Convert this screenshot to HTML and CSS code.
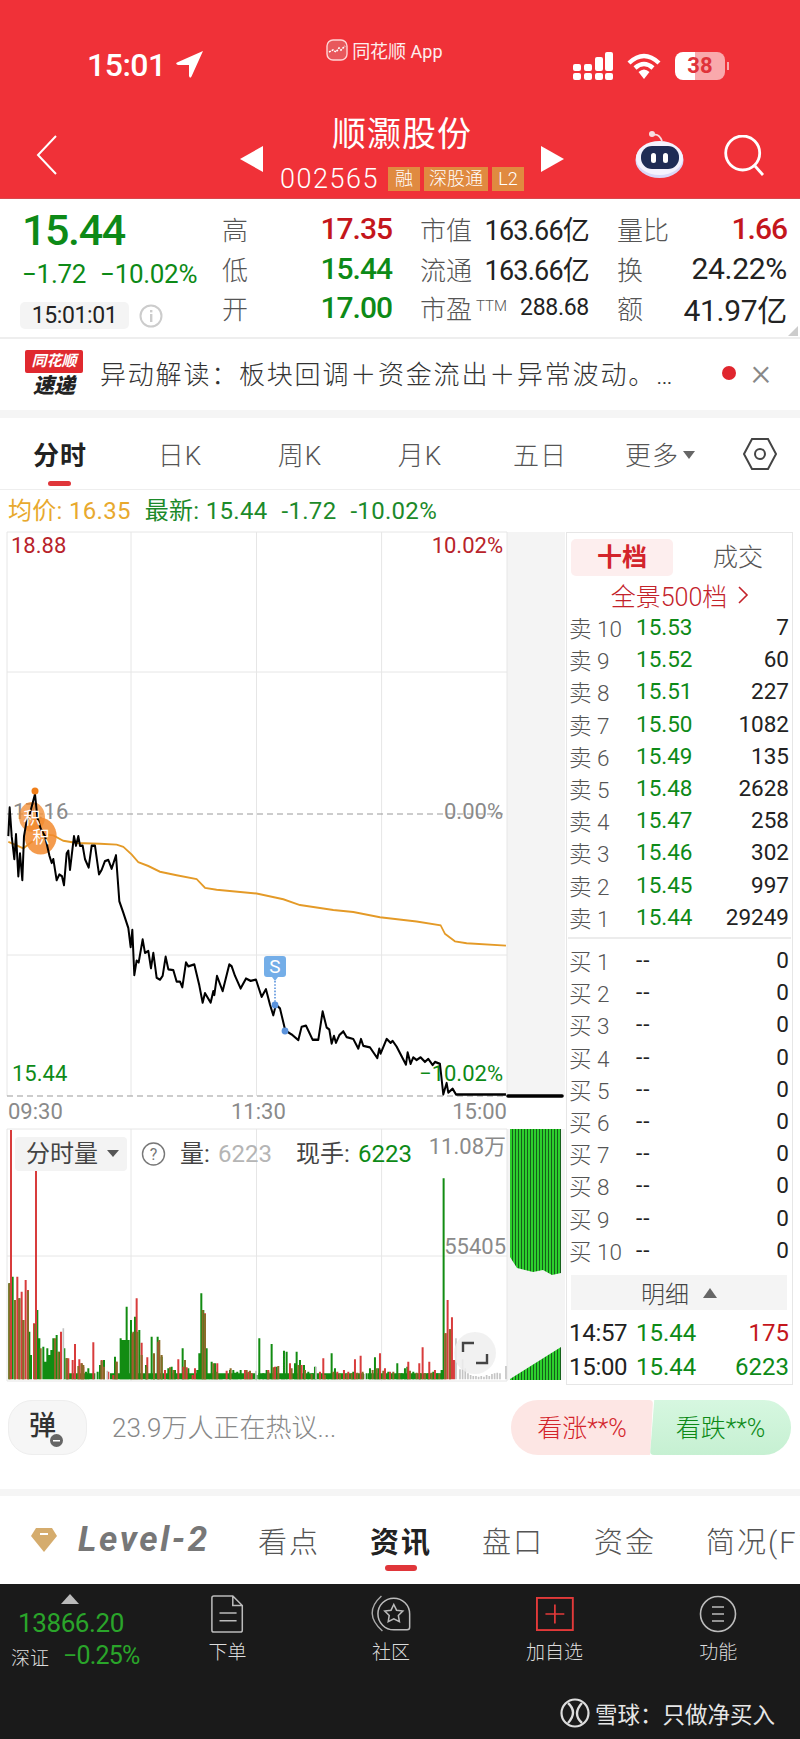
FILE: index.html
```html
<!DOCTYPE html>
<html lang="zh-CN">
<head>
  <meta charset="UTF-8" />
  <meta name="viewport" content="width=device-width, initial-scale=1.0"/>
  <title>顺灏股份</title>
  <link rel="stylesheet" href="styles.css">
</head>
<body>
  <header class="top">
    <div class="status">
      <div class="status-time">15:01
        <svg class="loc" viewBox="0 0 28 27"><path d="M27 0 L1 11.500 Q-1 13 2 14 L13 14 L13 25 Q14 28 15.500 25.500 Z" fill="#fff"/></svg>
      </div>
      <div class="status-app">
        <svg class="app-logo" viewBox="0 0 22 22"><rect x="1" y="1" width="20" height="20" rx="6" fill="#e8585c" stroke="#ffd5d5" stroke-width="1.4"/><path d="M3 13 L7 11 L10 13 L13 9 L15 11 L19 7" fill="none" stroke="#fff" stroke-width="1.6" stroke-dasharray="2 1"/></svg>
        <span>同花顺 App</span>
      </div>
      <div class="status-icons">
        <svg class="signal" viewBox="0 0 40 28" fill="#fff"><rect x="0" y="12" width="8" height="7" rx="2"/><rect x="0" y="21" width="8" height="7" rx="2"/><rect x="11" y="12" width="8" height="7" rx="2"/><rect x="11" y="21" width="8" height="7" rx="2"/><rect x="22" y="5" width="8" height="14" rx="2"/><rect x="22" y="21" width="8" height="7" rx="2"/><rect x="32" y="0" width="8" height="19" rx="2"/><rect x="32" y="21" width="8" height="7" rx="2"/></svg>
        <svg class="wifi" viewBox="0 0 34 28"><path d="M2 11 Q17 -3 32 11 M8 16 Q17 8 26 16" fill="none" stroke="#fff" stroke-width="4.4"/><path d="M11.500 20 Q17 15 22.500 20 L17 27 Z" fill="#fff"/></svg>
        <div class="battery"><span class="battery-num">38</span></div>
      </div>
    </div>
    <div class="nav">
      <svg class="back" viewBox="0 0 22 40"><path d="M20 1 L2 20 L20 39" fill="none" stroke="#fff" stroke-width="2"/></svg>
      <div class="nav-mid">
        <span class="tri-left"></span>
        <div class="stock">
          <div class="stock-name">顺灏股份</div>
          <div class="stock-meta">
            <span class="stock-code">002565</span>
            <span class="tag tag-s">融</span>
            <span class="tag tag-l">深股通</span>
            <span class="tag tag-s">L2</span>
          </div>
        </div>
        <span class="tri-right"></span>
      </div>
      <svg class="robot" viewBox="0 0 50 48">
        <circle cx="17" cy="4" r="3" fill="#f6dfe2"/><path d="M18 5 Q24 3 27 11" stroke="#f6dfe2" stroke-width="1.8" fill="none"/>
        <ellipse cx="24.500" cy="30" rx="24" ry="18" fill="#d9d8f8"/>
        <ellipse cx="24.500" cy="28" rx="23.500" ry="17" fill="#f4f3fe"/>
        <rect x="6" y="16" width="38" height="23" rx="11" fill="#1f2c55"/>
        <rect x="16" y="23" width="5" height="10" rx="2.500" fill="#fff"/><rect x="28" y="23" width="5" height="10" rx="2.500" fill="#fff"/>
      </svg>
      <svg class="search" viewBox="0 0 42 42"><circle cx="18.700" cy="18" r="17" fill="none" stroke="#fff" stroke-width="2.800"/><path d="M31 31 L39 40" stroke="#fff" stroke-width="2.800"/></svg>
    </div>
  </header>

  <section class="quote">
    <div class="quote-left">
      <div class="price">15.44</div>
      <div class="change"><span>−1.72</span><span>−10.02%</span></div>
      <div class="clock-row">
        <span class="clock">15:01:01</span>
        <svg class="info" viewBox="0 0 24 24"><circle cx="12" cy="12" r="10.500" fill="none" stroke="#ccc" stroke-width="2"/><rect x="11" y="10" width="2.400" height="8" fill="#ccc"/><rect x="11" y="6" width="2.400" height="2.400" fill="#ccc"/></svg>
      </div>
    </div>
    <div class="quote-grid">
      <div class="cell"><span class="lbl">高</span><span class="val up">17.35</span></div>
      <div class="cell"><span class="lbl">市值</span><span class="val2">163.66亿</span></div>
      <div class="cell"><span class="lbl">量比</span><span class="val up">1.66</span></div>
      <div class="cell"><span class="lbl">低</span><span class="val down">15.44</span></div>
      <div class="cell"><span class="lbl">流通</span><span class="val2">163.66亿</span></div>
      <div class="cell"><span class="lbl">换</span><span class="val-big">24.22%</span></div>
      <div class="cell"><span class="lbl">开</span><span class="val down">17.00</span></div>
      <div class="cell"><span class="lbl">市盈<sup class="ttm">TTM</sup></span><span class="val3">288.68</span></div>
      <div class="cell"><span class="lbl">额</span><span class="val-big">41.97亿</span></div>
    </div>
    <span class="corner"></span>
  </section>

  <section class="flash">
    <div class="flash-logo">
      <span class="flash-brand">同花顺</span>
      <span class="flash-sub">速递</span>
    </div>
    <div class="flash-text">异动解读：板块回调＋资金流出＋异常波动。…</div>
    <span class="flash-dot"></span>
    <span class="flash-close">×</span>
  </section>

  <nav class="tabs">
    <a class="tab tab-on">分时</a>
    <a class="tab">日K</a>
    <a class="tab">周K</a>
    <a class="tab">月K</a>
    <a class="tab">五日</a>
    <a class="tab">更多<i class="caret"></i></a>
    <svg class="hex" viewBox="0 0 36 36"><path d="M10 3 H26 L34 18 L26 33 H10 L2 18 Z" fill="none" stroke="#444" stroke-width="2"/><circle cx="18" cy="18" r="5" fill="none" stroke="#444" stroke-width="2"/></svg>
  </nav>

  <div class="legend">
    <span class="avg">均价: 16.35</span>
    <span class="latest">最新: 15.44</span>
    <span class="latest">-1.72</span>
    <span class="latest">-10.02%</span>
  </div>

  <main class="board">
    <svg class="chart" viewBox="0 530 566 856">
      <defs>
        <pattern id="stripes" x="510" width="3" height="10" patternUnits="userSpaceOnUse"><rect width="3" height="10" fill="#14601a"/><rect width="2" height="10" fill="#2dd02d"/></pattern>
      </defs>
      <rect x="507" y="532" width="58" height="564" fill="#f4f4f4"/>
      <rect x="507" y="1129" width="58" height="251" fill="#f4f4f4"/>
      <path d="M7 532 H507 M7 672 H507 M7 955 H507 M7 532 V1096 M507 532 V1096 M131 532 V1096 M256.500 532 V1096 M381.600 532 V1096" stroke="#e6e6e6" fill="none"/>
      <path d="M7 814 H507 M7 1096 H507" stroke="#999" stroke-dasharray="6 4" fill="none"/>
      <path d="M7 1129 H507 M7 1256 H507 M7 1381 H507 M7 1129 V1381 M131 1129 V1381 M256.500 1129 V1381 M381.600 1129 V1381 M507 1129 V1381" stroke="#e6e6e6" fill="none"/>

      <text class="ch up" x="11" y="553">18.88</text>
      <text class="ch up end" x="503" y="553">10.02%</text>
      <text class="ch mute" x="13" y="819">17.16</text>
      <text class="ch mute end" x="503" y="819">0.00%</text>
      <text class="ch down" x="12" y="1081">15.44</text>
      <text class="ch down end" x="503" y="1081">−10.02%</text>
      <text class="ch mute" x="8" y="1119">09:30</text>
      <text class="ch mute" x="231" y="1119">11:30</text>
      <text class="ch mute end" x="507" y="1119">15:00</text>

      <g transform="translate(0 530) scale(.3333 .3827)">
        <path fill="none" stroke="#e49a27" stroke-width="5" d="M25 815 L40 820 L70 832 L95 815 L130 795 L160 798 L190 812 L230 818 L300 820 L350 822 L370 828 L395 848 L415 868 L445 878 L480 893 L530 902 L590 912 L615 935 L650 940 L770 950 L850 965 L900 980 L1000 993 L1060 998 L1140 1012 L1250 1023 L1322 1033 L1335 1055 L1365 1075 L1400 1080 L1518 1086"/>
        <circle cx="96" cy="750" r="39" fill="#f28a2e" opacity=".75"/>
        <circle cx="122" cy="800" r="48" fill="#f28a2e" opacity=".85"/>
        <path fill="none" stroke="#000" stroke-width="6" stroke-linejoin="round" d="M25 800 L29 725 L35 800 L43 860 L48 795 L55 905 L60 845 L67 915 L72 800 L80 760 L90 740 L105 690 L112 750 L122 780 L135 800 L148 850 L155 870 L160 860 L170 915 L178 900 L186 905 L192 928 L200 845 L205 838 L210 888 L222 800 L228 825 L235 800 L240 825 L248 825 L255 860 L266 882 L275 825 L285 825 L297 900 L305 888 L315 865 L325 862 L335 885 L348 850 L358 970 L370 1000 L385 1040 L392 1090 L397 1045 L403 1163 L410 1125 L416 1130 L428 1070 L435 1105 L445 1100 L453 1145 L460 1105 L470 1170 L480 1175 L488 1165 L497 1115 L505 1148 L520 1150 L530 1180 L540 1180 L547 1195 L558 1130 L565 1140 L583 1135 L598 1190 L608 1235 L615 1210 L632 1235 L640 1205 L643 1215 L651 1165 L668 1205 L688 1135 L695 1140 L705 1165 L722 1198 L738 1172 L752 1178 L768 1175 L785 1220 L798 1200 L810 1240 L820 1268 L828 1240 L840 1250 L856 1308 L875 1318 L895 1333 L905 1298 L918 1295 L938 1332 L955 1332 L968 1258 L980 1300 L988 1305 L995 1342 L1002 1322 L1008 1340 L1018 1320 L1030 1310 L1040 1325 L1060 1330 L1075 1355 L1083 1330 L1090 1348 L1110 1352 L1132 1380 L1138 1355 L1142 1368 L1160 1330 L1172 1340 L1178 1335 L1190 1350 L1218 1397 L1223 1365 L1232 1395 L1240 1378 L1250 1385 L1262 1378 L1275 1390 L1285 1382 L1298 1398 L1305 1390 L1320 1395 L1330 1475 L1340 1445 L1345 1470 L1358 1460 L1368 1475 L1518 1475"/>
      </g>
      <circle cx="35" cy="791" r="3.500" fill="#f07f1a"/>
      <text class="mark" x="32" y="824">积</text>
      <text class="mark" x="41" y="843">积</text>

      <path d="M267 956 H283 Q286 956 286 959 V974 Q286 977 283 977 H278 L275 981 L272 977 H267 Q264 977 264 974 V959 Q264 956 267 956 Z" fill="#74aee8"/>
      <text class="s-mark" x="275" y="973">S</text>
      <path d="M275 981 V1005" stroke="#5b93dc" stroke-width="1.600" stroke-dasharray="1.600 1.600"/>
      <circle cx="275" cy="1005" r="3.400" fill="#5b93dc"/>
      <circle cx="285" cy="1031" r="3.400" fill="#5b93dc"/>

      <path d="M508 1096 H562" stroke="#000" stroke-width="3.600" stroke-linecap="round"/>
      <path d="M510 1129 H561 V1273 L552 1275 L543 1270 L533 1272 L517 1268 L510 1257 Z" fill="url(#stripes)"/>
      <path d="M510 1380 L510 1379 L561 1347 V1380 Z" fill="url(#stripes)"/>

      <g transform="translate(0 1120) scale(.3333)" fill="none" stroke-width="6">
        <path stroke="#128c12" stroke-width="18" d="M200 769 H286 M330 769 H768 M775 769 H1092 M1104 769 H1330"/>
        <path stroke="#128c12" d="M28 778V490M38 778V470M45 778V540M58 778V535M70 778V600M88 778V635M93 778V705M112 778V570M118 778V655M130 778V680M136 778V725M142 778V685M148 778V705M154 778V690M160 778V655M170 778V645M178 778V695M193 778V685M200 778V715M258 778V755M265 778V745M293 778V755M300 778V735M312 778V720M345 778V710M362 778V655M368 778V660M374 778V660M380 778V560M386 778V660M393 778V600M405 778V590M418 778V630M438 778V735M455 778V650M462 778V705M473 778V650M485 778V710M505 778V745M515 778V740M525 778V750M548 778V685M565 778V745M592 778V750M598 778V700M604 778V520M610 778V570M620 778V685M628 778V770M635 778V725M645 778V730M660 778V765M665 778V765M690 778V750M700 778V750M706 778V758M712 778V755M722 778V750M770 778V765M778 778V655M790 778V760M800 778V750M815 778V672M830 778V740M846 778V775M852 778V692M860 778V695M885 778V730M890 778V695M900 778V720M912 778V735M925 778V755M938 778V760M945 778V740M985 778V770M995 778V700M1005 778V745M1060 778V755M1100 778V760M1110 778V745M1125 778V712M1135 778V745M1165 778V755M1192 778V730M1205 778V760M1215 778V745M1222 778V740M1240 778V755M1260 778V760M1285 778V760M1300 778V755M1312 778V760M1325 778V750M1331 778V175"/>
        <path stroke="#d83c3c" d="M33 778V30M52 778V470M65 778V515M77 778V480M84 778V510M102 778V610M108 778V145M183 778V635M205 778V715M218 778V720M225 778V672M238 778V718M245 778V730M250 778V740M280 778V667M305 778V720M325 778V755M340 778V765M350 778V725M398 778V640M410 778V535M425 778V668M442 778V712M475 778V665M495 778V750M535 778V718M550 778V740M560 778V742M578 778V765M585 778V745M615 778V580M652 778V730M680 778V752M735 778V750M745 778V755M755 778V760M805 778V750M825 778V740M870 778V730M905 778V735M960 778V755M970 778V715M1012 778V755M1032 778V750M1045 778V755M1065 778V718M1082 778V707M1140 778V700M1155 778V745M1170 778V755M1225 778V725M1258 778V730M1268 778V682M1288 778V725M1305 778V750M1336 778V640M1343 778V540M1350 778V628M1356 778V592M1362 778V720"/>
        <path stroke="#8a6a28" d="M28 778V490M45 778V540M58 778V535M70 778V600M84 778V512M105 778V612M122 778V685M165 778V655M175 778V695M200 778V715M235 778V738M245 778V730M250 778V735M305 778V722M312 778V740M350 778V725M400 778V635M412 778V635M425 778V705M440 778V740M462 778V700M478 778V660M485 778V705M510 778V742M520 778V750M555 778V720M608 778V570M615 778V582M640 778V730M650 778V755M692 778V745M740 778V750M750 778V752M805 778V755M820 778V742M835 778V738M875 778V745M895 778V735M915 778V750M935 778V762M975 778V765M1000 778V755M1020 778V762M1040 778V762M1055 778V760M1072 778V758M1088 778V755M1118 778V750M1130 778V745M1150 778V752M1180 778V755M1198 778V760M1230 778V752M1250 778V758M1275 778V760M1295 778V758M1318 778V762M1337 778V640M1350 778V628"/>
        <path stroke="#c4c4c4" stroke-width="5" d="M190 778V625M322 778V752M768 778V752M948 778V740M1095 778V762M1368 778V655M1380 778V748M1388 778V718M1396 778V745M1404 778V760M1412 778V765M1420 778V768M1428 778V768M1436 778V770M1444 778V768M1452 778V770M1460 778V765M1468 778V768M1476 778V762M1484 778V760M1492 778V758M1500 778V760M1518 778V738"/>
      </g>

      <rect x="15" y="1137" width="112" height="34" rx="4" fill="#f3f3f3"/>
      <text class="vol ink" x="26" y="1162">分时量</text>
      <path d="M107 1150 H119 L113 1157 Z" fill="#555"/>
      <circle cx="153.500" cy="1154" r="11" fill="none" stroke="#777" stroke-width="1.400"/>
      <text class="help" x="153.500" y="1160">?</text>
      <text class="vol ink" x="180" y="1162">量:</text>
      <text class="vol pale" x="218" y="1162">6223</text>
      <text class="vol ink" x="296" y="1162">现手:</text>
      <text class="vol down" x="358" y="1162">6223</text>
      <text class="vol-side mute end" x="506" y="1154">11.08万</text>
      <text class="vol-side mute end" x="506" y="1254">55405</text>

      <circle cx="475" cy="1353" r="21" fill="#eee" opacity=".85"/>
      <path d="M463 1352 V1343 H474 M487 1354 V1363 H476" fill="none" stroke="#444" stroke-width="2.400"/>
    </svg>

    <aside class="book">
      <div class="book-tabs">
        <span class="book-tab book-tab-on">十档</span>
        <span class="book-tab">成交</span>
      </div>
      <div class="book-link">全景500档 <svg class="chev" viewBox="0 0 12 20"><path d="M2 2 L10 10 L2 18" fill="none" stroke="#c3222a" stroke-width="1.600"/></svg></div>
      <div class="rows">
        <div class="row"><span class="r-l">卖 10</span><span class="r-p">15.53</span><span class="r-q">7</span></div>
        <div class="row"><span class="r-l">卖 9</span><span class="r-p">15.52</span><span class="r-q">60</span></div>
        <div class="row"><span class="r-l">卖 8</span><span class="r-p">15.51</span><span class="r-q">227</span></div>
        <div class="row"><span class="r-l">卖 7</span><span class="r-p">15.50</span><span class="r-q">1082</span></div>
        <div class="row"><span class="r-l">卖 6</span><span class="r-p">15.49</span><span class="r-q">135</span></div>
        <div class="row"><span class="r-l">卖 5</span><span class="r-p">15.48</span><span class="r-q">2628</span></div>
        <div class="row"><span class="r-l">卖 4</span><span class="r-p">15.47</span><span class="r-q">258</span></div>
        <div class="row"><span class="r-l">卖 3</span><span class="r-p">15.46</span><span class="r-q">302</span></div>
        <div class="row"><span class="r-l">卖 2</span><span class="r-p">15.45</span><span class="r-q">997</span></div>
        <div class="row"><span class="r-l">卖 1</span><span class="r-p">15.44</span><span class="r-q">29249</span></div>
      </div>
      <div class="rows rows-buy">
        <div class="row"><span class="r-l">买 1</span><span class="r-p r-none">--</span><span class="r-q">0</span></div>
        <div class="row"><span class="r-l">买 2</span><span class="r-p r-none">--</span><span class="r-q">0</span></div>
        <div class="row"><span class="r-l">买 3</span><span class="r-p r-none">--</span><span class="r-q">0</span></div>
        <div class="row"><span class="r-l">买 4</span><span class="r-p r-none">--</span><span class="r-q">0</span></div>
        <div class="row"><span class="r-l">买 5</span><span class="r-p r-none">--</span><span class="r-q">0</span></div>
        <div class="row"><span class="r-l">买 6</span><span class="r-p r-none">--</span><span class="r-q">0</span></div>
        <div class="row"><span class="r-l">买 7</span><span class="r-p r-none">--</span><span class="r-q">0</span></div>
        <div class="row"><span class="r-l">买 8</span><span class="r-p r-none">--</span><span class="r-q">0</span></div>
        <div class="row"><span class="r-l">买 9</span><span class="r-p r-none">--</span><span class="r-q">0</span></div>
        <div class="row"><span class="r-l">买 10</span><span class="r-p r-none">--</span><span class="r-q">0</span></div>
      </div>
      <div class="detail-head">明细<i class="detail-tri"></i></div>
      <div class="row row-deal"><span class="r-l r-time">14:57</span><span class="r-p">15.44</span><span class="r-q up">175</span></div>
      <div class="row row-deal"><span class="r-l r-time">15:00</span><span class="r-p">15.44</span><span class="r-q down">6223</span></div>
    </aside>
  </main>

  <section class="talk">
    <div class="danmu">弹<i class="danmu-off"></i></div>
    <div class="talk-text">23.9万人正在热议...</div>
    <div class="vote">
      <span class="vote-up">看涨**%</span>
      <span class="vote-down">看跌**%</span>
    </div>
  </section>

  <nav class="subtabs">
    <svg class="gem" viewBox="0 0 28 26"><path d="M6 1 H22 L27 9 L14 25 L1 9 Z" fill="#d5ac6d"/><rect x="10" y="6" width="8" height="2" fill="#fff"/></svg>
    <span class="level">Level-2</span>
    <a class="subtab">看点</a>
    <a class="subtab subtab-on">资讯</a>
    <a class="subtab">盘口</a>
    <a class="subtab">资金</a>
    <a class="subtab subtab-last">简况(F10)</a>
  </nav>

  <footer class="dock">
    <div class="dock-row">
      <div class="market">
        <i class="market-tri"></i>
        <div class="market-num">13866.20</div>
        <div class="market-sub"><span class="market-name">深证</span><span class="market-pct">−0.25%</span></div>
      </div>
      <div class="dock-item">
        <svg class="dock-ico" viewBox="0 0 36 40"><path d="M2 3 Q2 1 4 1 H24 L34 11 V37 Q34 39 32 39 H4 Q2 39 2 37 Z M24 1 V11 H34 M10 19 H28 M10 27 H28" fill="none" stroke="#bbb" stroke-width="1.600"/></svg>
        <span>下单</span>
      </div>
      <div class="dock-item">
        <svg class="dock-ico" viewBox="0 0 42 40"><path d="M11 1 Q-9 19 12 38" fill="none" stroke="#aaa" stroke-width="1.500"/><path d="M40.700 20 A16.700 16.700 0 1 0 24 36.700 H38 Q40.700 36.700 40.700 34 Z" fill="none" stroke="#bbb" stroke-width="1.600"/><path d="M24 10 L26.900 16 L33.500 16.900 L28.800 21.500 L29.900 28.100 L24 25 L18.100 28.100 L19.200 21.500 L14.500 16.900 L21.100 16 Z" fill="none" stroke="#bbb" stroke-width="1.600"/></svg>
        <span>社区</span>
      </div>
      <div class="dock-item">
        <svg class="dock-ico dock-ico-add" viewBox="0 0 40 36"><rect x="1" y="1" width="38" height="34" fill="none" stroke="#e33a3a" stroke-width="2"/><path d="M20 8 V28 M10 18 H30" stroke="#e33a3a" stroke-width="1.800"/></svg>
        <span>加自选</span>
      </div>
      <div class="dock-item">
        <svg class="dock-ico" viewBox="0 0 38 38"><circle cx="19" cy="19" r="17.500" fill="none" stroke="#bbb" stroke-width="1.600"/><path d="M13 12 H25 M13 19 H25 M13 26 H25" stroke="#bbb" stroke-width="1.600"/></svg>
        <span>功能</span>
      </div>
    </div>
    <div class="watermark">
      <svg class="wm-ico" viewBox="0 0 30 30"><circle cx="15" cy="15" r="13.500" fill="none" stroke="#ddd" stroke-width="2.200"/><path d="M8 5 Q18 14 8 25 M22 5 Q12 16 22 25" fill="none" stroke="#ddd" stroke-width="2.400"/></svg>
      <span>雪球：只做净买入</span>
    </div>
  </footer>
</body>
</html>
```

FILE: styles.css
```css
* {
  box-sizing: border-box;
}
html, body {
  margin: 0;
  padding: 0;
}
body {
  width: 800px;
  height: 1739px;
  overflow: hidden;
  background: #fff;
  font-family: Roboto, "Noto Sans CJK SC", sans-serif;
  color: #222;
}
i {
  display: block;
}

.up { color: #c4161c; fill: #b8232a; }
.down { color: #0d8a17; fill: #0d8a17; }

/* red header */
.top {
  height: 199px;
  background: #f03138;
  color: #fff;
  border-bottom: 1px solid #d9484d;
}
.status {
  height: 104px;
  padding-top: 38px;
  position: relative;
  display: flex;
  justify-content: space-between;
}
.status-time {
  margin: 11px 0 0 87px;
  display: flex;
  align-items: flex-start;
  gap: 10px;
  font-size: 32px;
  line-height: 32px;
  font-weight: 500;
  letter-spacing: -.5px;
}
.loc {
  width: 28px;
  height: 27px;
  margin-top: 2px;
}
.status-app {
  display: flex;
  align-items: center;
  gap: 4px;
  height: 24px;
  margin-left: -8px;
  font-size: 18px;
  color: #fdeeee;
}
.app-logo {
  width: 22px;
  height: 22px;
}
.status-icons {
  display: flex;
  align-items: center;
  gap: 14px;
  height: 28px;
  margin: 14px 75px 0 0;
}
.signal {
  width: 40px;
  height: 28px;
}
.wifi {
  width: 34px;
  height: 28px;
}
.battery {
  width: 50px;
  height: 28px;
  border-radius: 8px;
  background: linear-gradient(90deg, #fff 0, #fff 40%, #f9a9ac 40%);
  text-align: center;
  position: relative;
}
.battery::after {
  content: "";
  position: absolute;
  right: -4px;
  top: 10px;
  width: 2px;
  height: 8px;
  background: #f9a9ac;
}
.battery-num {
  font-size: 22px;
  line-height: 28px;
  font-weight: 700;
  color: #e0323a;
}

.nav {
  height: 94px;
  display: flex;
  align-items: flex-start;
  padding-left: 36px;
}
.back {
  width: 22px;
  height: 40px;
  margin-top: 31px;
}
.nav-mid {
  display: flex;
  align-items: center;
  justify-content: space-between;
  width: 324px;
  margin-left: 182px;
  height: 94px;
}
.tri-left, .tri-right {
  width: 0;
  height: 0;
  margin-top: 16px;
  border-top: 13px solid transparent;
  border-bottom: 13px solid transparent;
}
.tri-left { border-right: 23px solid #fff; }
.tri-right { border-left: 23px solid #fff; }
.stock {
  text-align: center;
  height: 94px;
}
.stock-name {
  font-size: 34px;
  line-height: 40px;
  margin-top: 10px;
  letter-spacing: 1px;
  font-weight: 400;
}
.stock-meta {
  display: flex;
  align-items: center;
  gap: 4px;
  margin-top: 13px;
  height: 24px;
}
.stock-code {
  font-size: 27px;
  font-weight: 300;
  letter-spacing: 1.5px;
  margin-right: 5px;
}
.tag {
  height: 24px;
  line-height: 24px;
  background: #e08a40;
  font-size: 18px;
  font-weight: 300;
  text-align: center;
}
.tag-s { width: 32px; }
.tag-l { width: 64px; }
.robot {
  width: 50px;
  height: 48px;
  margin: 26px 0 0 71px;
}
.search {
  width: 42px;
  height: 42px;
  margin: 31px 0 0 39px;
}

/* quote block */
.quote {
  height: 140px;
  display: flex;
  position: relative;
  border-bottom: 2px solid #eee;
}
.quote-left {
  width: 222px;
  padding: 10px 0 0 22px;
}
.price {
  font-size: 43px;
  line-height: 42px;
  font-weight: 500;
  letter-spacing: -1.4px;
  color: #0d8a17;
}
.change {
  display: flex;
  gap: 14px;
  margin-top: 9px;
  font-size: 26px;
  line-height: 28px;
  color: #0d8a17;
  letter-spacing: -.3px;
  white-space: nowrap;
}
.clock-row {
  display: flex;
  align-items: center;
  gap: 10px;
  margin-top: 14px;
}
.clock {
  width: 109px;
  height: 27px;
  line-height: 27px;
  margin-left: -2px;
  text-align: center;
  background: #f4f4f4;
  border-radius: 5px;
  font-size: 23px;
  letter-spacing: -.4px;
}
.info {
  width: 24px;
  height: 24px;
}
.quote-grid {
  width: 564px;
  margin-top: 10px;
  display: grid;
  grid-template-columns: 170px 169px 170px;
  column-gap: 28px;
  grid-auto-rows: 39.5px;
}
.cell {
  display: flex;
  align-items: center;
  justify-content: space-between;
}
.lbl {
  font-size: 26px;
  font-weight: 300;
  color: #555;
  white-space: nowrap;
}
.ttm {
  font-size: 15px;
  margin-left: 4px;
  vertical-align: 8px;
  line-height: 0;
}
.val {
  font-size: 30px;
  font-weight: 500;
  letter-spacing: -1px;
}
.val2 {
  font-size: 27px;
  letter-spacing: -.8px;
}
.val3 {
  font-size: 23px;
  letter-spacing: -.3px;
}
.val-big {
  font-size: 30px;
  letter-spacing: -.3px;
}
.corner {
  position: absolute;
  right: 2px;
  bottom: 1px;
  width: 0;
  height: 0;
  border-left: 10px solid transparent;
  border-bottom: 10px solid #ccc;
}

/* flash news */
.flash {
  height: 71px;
  display: flex;
  align-items: center;
  border-bottom: 8px solid #f5f5f5;
  box-sizing: content-box;
}
.flash-logo {
  width: 58px;
  margin-left: 25px;
  display: flex;
  flex-direction: column;
  align-items: center;
}
.flash-brand {
  width: 58px;
  height: 23px;
  line-height: 23px;
  background: #e0292f;
  border-radius: 2px;
  color: #fff;
  font-size: 15px;
  font-weight: 700;
  font-style: italic;
  text-align: center;
}
.flash-sub {
  font-size: 21px;
  line-height: 26px;
  font-weight: 900;
  font-style: italic;
  color: #222;
}
.flash-text {
  width: 610px;
  margin: 0 0 4px 17px;
  font-size: 26px;
  letter-spacing: 1.8px;
  font-weight: 300;
  white-space: nowrap;
  color: #333;
}
.flash-dot {
  width: 14px;
  height: 14px;
  margin: 0 0 4px 12px;
  border-radius: 50%;
  background: #e0262e;
}
.flash-close {
  margin: 0 0 6px 15px;
  font-size: 38px;
  line-height: 32px;
  font-weight: 300;
  color: #888;
}

/* chart period tabs */
.tabs {
  height: 72px;
  display: grid;
  grid-template-columns: repeat(6, 120px) 80px;
  align-items: center;
  border-bottom: 1px solid #eee;
  position: relative;
}
.tab {
  display: flex;
  justify-content: center;
  align-items: center;
  font-size: 26px;
  font-weight: 300;
  color: #555;
  letter-spacing: 1px;
}
.tab-on {
  position: relative;
  font-weight: 700;
  color: #222;
}
.tab-on::after {
  content: "";
  position: absolute;
  left: 48px;
  top: 46px;
  width: 23px;
  height: 5px;
  border-radius: 3px;
  background: #e0363a;
}
.caret {
  margin: 2px 0 0 4px;
  border-left: 6px solid transparent;
  border-right: 6px solid transparent;
  border-top: 8px solid #666;
}
.hex {
  width: 36px;
  height: 36px;
  margin-left: 22px;
}

.legend {
  height: 40px;
  padding: 8px 0 0 8px;
  display: flex;
  gap: 14px;
  font-size: 24px;
  line-height: 26px;
  letter-spacing: .3px;
}
.avg { color: #e8a92e; }
.latest { color: #1c8a2a; }

/* chart + order book */
.board {
  display: flex;
  height: 856px;
}
.chart {
  width: 566px;
  height: 856px;
  flex: none;
}
.ch {
  font-size: 22px;
}
.end {
  text-anchor: end;
}
.mute {
  fill: #8a8a8a;
}
.ink {
  fill: #444;
}
.pale {
  fill: #b5b5b5;
}
.mark {
  font-size: 17px;
  fill: #fff;
  text-anchor: middle;
}
.s-mark {
  font-size: 19px;
  fill: #fff;
  text-anchor: middle;
}
.vol {
  font-size: 24px;
}
.vol-side {
  font-size: 22px;
}
.help {
  font-size: 16px;
  fill: #777;
  text-anchor: middle;
}
.book {
  width: 227px;
  height: 853px;
  margin-top: 2px;
  padding: 6px 3px 0 4px;
  border: 1px solid #e6e6e6;
}
.book-tabs {
  display: flex;
  height: 37px;
}
.book-tab {
  width: 102px;
  line-height: 37px;
  text-align: center;
  font-size: 25px;
  font-weight: 300;
  color: #555;
}
.book-tab + .book-tab {
  margin-left: 14px;
}
.book-tab-on {
  background: #fdeeee;
  border-radius: 5px;
  color: #d3242b;
  font-weight: 700;
}
.book-link {
  height: 38px;
  margin-bottom: -3px;
  display: flex;
  align-items: center;
  justify-content: center;
  gap: 6px;
  color: #c3222a;
  font-size: 25px;
  font-weight: 300;
}
.chev {
  width: 12px;
  height: 20px;
  margin-left: 4px;
}
.rows {
  height: 322px;
}
.rows-buy {
  margin-top: 4px;
  padding-top: 5px;
  height: 329px;
  border-top: 2px solid #ececec;
  margin-left: -3px;
  margin-right: -2px;
  padding-left: 3px;
  padding-right: 2px;
}
.row {
  display: flex;
  height: 32.2px;
  align-items: center;
  font-size: 22.5px;
}
.r-l {
  width: 66px;
  margin-left: -2px;
  margin-right: 1px;
  color: #555;
  font-weight: 300;
  white-space: nowrap;
}
.r-p {
  width: 60px;
  color: #0d8a17;
}
.r-none {
  color: #222;
  letter-spacing: 1px;
}
.r-q {
  flex: 1;
  text-align: right;
}
.r-time {
  color: #222;
  font-weight: 400;
  letter-spacing: -.3px;
}
.detail-head {
  height: 35px;
  margin: 9px 2px 6px 0;
  display: flex;
  align-items: center;
  justify-content: center;
  gap: 14px;
  background: #f4f4f4;
  font-size: 24px;
  font-weight: 300;
  color: #444;
}
.detail-tri {
  border-left: 7px solid transparent;
  border-right: 7px solid transparent;
  border-bottom: 10px solid #666;
}
.row-deal {
  height: 34px;
  font-size: 24px;
}

/* comment bar */
.talk {
  height: 103px;
  padding: 14px 9px 0 8px;
  display: flex;
  align-items: flex-start;
}
.danmu {
  position: relative;
  width: 79px;
  height: 55px;
  line-height: 51px;
  padding-left: 20px;
  border: 1px solid #eee;
  border-radius: 24px;
  background: #f6f6f6;
  font-size: 27px;
  font-weight: 500;
  color: #333;
}
.danmu-off {
  position: absolute;
  left: 41px;
  top: 33px;
  width: 13px;
  height: 13px;
  border-radius: 50%;
  background: #666 linear-gradient(#fff, #fff) center / 7px 1.5px no-repeat;
}
.talk-text {
  margin: 13px 0 0 25px;
  font-size: 26px;
  line-height: 30px;
  font-weight: 300;
  color: #888;
}
.vote {
  margin-left: auto;
  display: flex;
  height: 55px;
  font-size: 25px;
  font-weight: 300;
  line-height: 58px;
  text-align: center;
}
.vote-up {
  width: 142px;
  background: #fde6e4;
  color: #d3242b;
  border-radius: 27px 4px 4px 27px;
  clip-path: polygon(0 0, 100% 0, 98% 100%, 0 100%);
}
.vote-down {
  width: 141px;
  margin-left: -3px;
  background: linear-gradient(#d6f7e0, #c6f0d2);
  color: #0d8a17;
  border-radius: 4px 27px 27px 4px;
  clip-path: polygon(3% 0, 100% 0, 100% 100%, 0 100%);
}

/* info tabs */
.subtabs {
  border-top: 7px solid #f5f5f5;
  height: 95px;
  display: flex;
  align-items: center;
  overflow: hidden;
  white-space: nowrap;
  padding: 0 0 0 30px;
}
.gem {
  width: 28px;
  height: 26px;
  flex: none;
}
.level {
  margin: 0 50px 0 20px;
  width: 130px;
  flex: none;
  font-size: 35px;
  line-height: 40px;
  font-weight: 700;
  font-style: italic;
  letter-spacing: 2.6px;
  color: #777;
}
.subtab {
  position: relative;
  margin-right: 50px;
  flex: none;
  font-size: 29px;
  font-weight: 300;
  letter-spacing: 2px;
  color: #555;
}
.subtab-last {
  margin-right: 0;
}
.subtab-on {
  font-weight: 700;
  color: #222;
}
.subtab-on::after {
  content: "";
  position: absolute;
  left: 15px;
  top: 46px;
  width: 32px;
  height: 6px;
  border-radius: 3px;
  background: #e0363a;
}

/* dark dock */
.dock {
  height: 155px;
  background: #1a1a1a;
  color: #ddd;
}
.dock-row {
  display: flex;
  height: 100px;
}
.market {
  width: 146px;
  padding-top: 10px;
  position: relative;
}
.market-tri {
  width: 0;
  margin-left: 61px;
  border-left: 9px solid transparent;
  border-right: 9px solid transparent;
  border-bottom: 10px solid #bbb;
}
.market-num {
  margin: 4px 0 0 18px;
  font-size: 26px;
  line-height: 30px;
  color: #2aa52a;
  letter-spacing: -.4px;
}
.market-sub {
  display: flex;
  align-items: center;
  gap: 14px;
  margin: 3px 0 0 11px;
}
.market-name {
  font-size: 19px;
  font-weight: 300;
}
.market-pct {
  font-size: 25px;
  line-height: 30px;
  color: #2aa52a;
  letter-spacing: -.8px;
}
.dock-item {
  width: 164px;
  padding-top: 11px;
  display: flex;
  flex-direction: column;
  align-items: center;
  font-size: 19px;
  font-weight: 300;
}
.dock-ico {
  height: 38px;
  margin-bottom: 4px;
}
.dock-ico-add {
  height: 34px;
  margin: 2px 0 6px;
}
.watermark {
  display: flex;
  justify-content: flex-end;
  align-items: center;
  gap: 5px;
  padding: 13px 25px 0 0;
  font-size: 22.5px;
  font-weight: 400;
  color: #e6e6e6;
}
.wm-ico {
  width: 30px;
  height: 30px;
}
```
